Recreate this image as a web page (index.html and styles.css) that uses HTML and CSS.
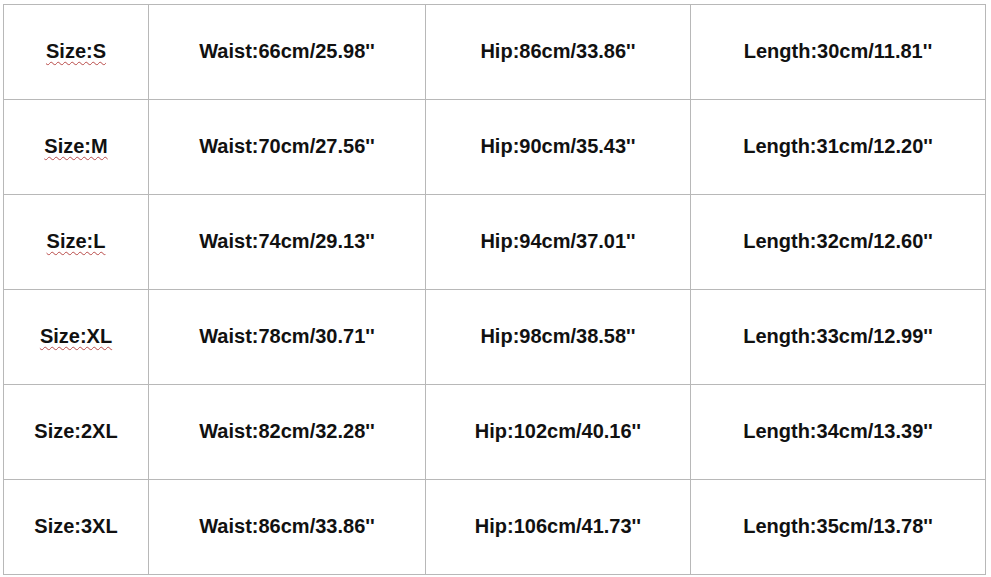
FILE: index.html
```html
<!DOCTYPE html>
<html>
<head>
<meta charset="utf-8">
<link rel="stylesheet" href="styles.css">
</head>
<body>
<div class="chart">
  <div class="cell"><span class="spell">Size:S</span></div>
  <div class="cell">Waist:66cm/25.98''</div>
  <div class="cell">Hip:86cm/33.86''</div>
  <div class="cell">Length:30cm/11.81''</div>

  <div class="cell"><span class="spell">Size:M</span></div>
  <div class="cell">Waist:70cm/27.56''</div>
  <div class="cell">Hip:90cm/35.43''</div>
  <div class="cell">Length:31cm/12.20''</div>

  <div class="cell"><span class="spell">Size:L</span></div>
  <div class="cell">Waist:74cm/29.13''</div>
  <div class="cell">Hip:94cm/37.01''</div>
  <div class="cell">Length:32cm/12.60''</div>

  <div class="cell"><span class="spell">Size:XL</span></div>
  <div class="cell">Waist:78cm/30.71''</div>
  <div class="cell">Hip:98cm/38.58''</div>
  <div class="cell">Length:33cm/12.99''</div>

  <div class="cell">Size:2XL</div>
  <div class="cell">Waist:82cm/32.28''</div>
  <div class="cell">Hip:102cm/40.16''</div>
  <div class="cell">Length:34cm/13.39''</div>

  <div class="cell">Size:3XL</div>
  <div class="cell">Waist:86cm/33.86''</div>
  <div class="cell">Hip:106cm/41.73''</div>
  <div class="cell">Length:35cm/13.78''</div>
</div>
</body>
</html>
```
FILE: styles.css
```css
html, body {
  margin: 0;
  padding: 0;
  background: #ffffff;
}

body {
  padding: 4px 0 0 3px;
  font-family: "Liberation Sans", Arial, sans-serif;
}

.chart {
  display: grid;
  grid-template-columns: 144px 276px 264px 294px;
  grid-template-rows: repeat(6, 94px);
  gap: 1px;
  padding: 1px;
  width: 983px;
  box-sizing: border-box;
  background: #b8b8b8;
}

.cell {
  background: #ffffff;
  display: flex;
  align-items: center;
  justify-content: center;
  font-weight: bold;
  font-size: 20px;
  color: #111111;
  padding-bottom: 2px;
  box-sizing: border-box;
}

.spell {
  text-decoration: underline wavy #b84a48;
  text-decoration-thickness: 1px;
  text-underline-offset: 3px;
}
```
